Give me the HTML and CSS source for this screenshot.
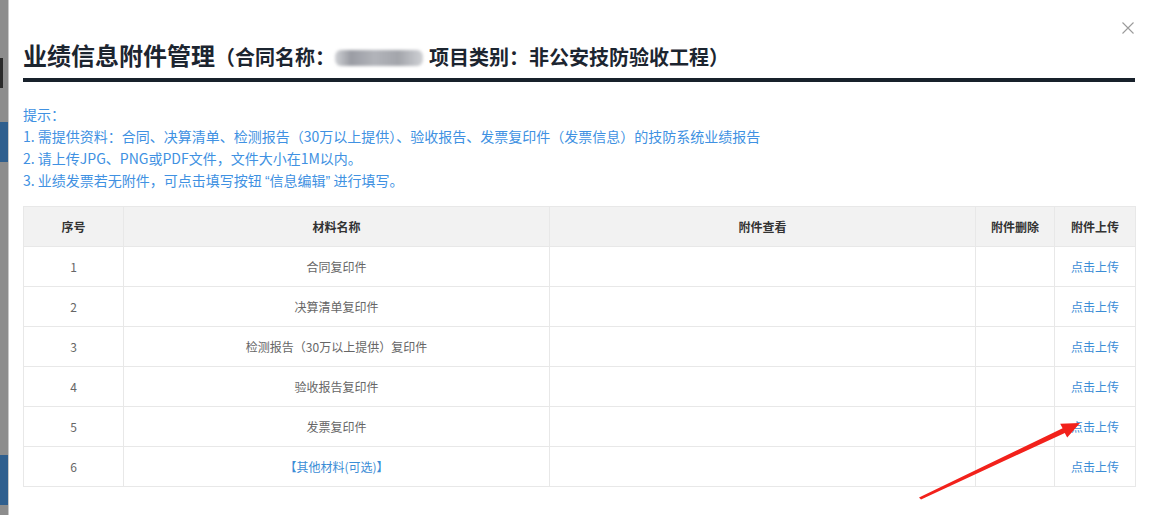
FILE: index.html
```html
<!DOCTYPE html>
<html lang="zh-CN">
<head>
<meta charset="utf-8">
<title>业绩信息附件管理</title>
<link rel="stylesheet" href="styles.css">
</head>
<body>
<div class="page">
  <div class="backdrop">
    <span class="bd-dark b1"></span>
    <span class="bd-blue b2"></span>
    <span class="bd-blue b3"></span>
  </div>
  <div class="modal">
    <svg class="close" width="12" height="12" viewBox="0 0 12 12"><path d="M0.5 0.5 L11.5 11.5 M11.5 0.5 L0.5 11.5" stroke="#9b9b9b" stroke-width="1.1" fill="none"/></svg>
    <h1 class="title">业绩信息附件管理<span class="sub">（合同名称：<span class="blur"></span>项目类别：非公安技防验收工程）</span></h1>
    <div class="rule"></div>
    <div class="tips">
      <p>提示：</p>
      <p>1. 需提供资料：合同、决算清单、检测报告（30万以上提供）、验收报告、发票复印件（发票信息）的技防系统业绩报告</p>
      <p>2. 请上传JPG、PNG或PDF文件，文件大小在1M以内。</p>
      <p>3. 业绩发票若无附件，可点击填写按钮 <span class="q">“</span>信息编辑<span class="q">”</span> 进行填写。</p>
    </div>
    <table class="grid">
      <colgroup>
        <col class="c1"><col class="c2"><col class="c3"><col class="c4"><col class="c5">
      </colgroup>
      <thead>
        <tr><th>序号</th><th>材料名称</th><th>附件查看</th><th>附件删除</th><th>附件上传</th></tr>
      </thead>
      <tbody>
        <tr><td>1</td><td>合同复印件</td><td></td><td></td><td><a class="link">点击上传</a></td></tr>
        <tr><td>2</td><td>决算清单复印件</td><td></td><td></td><td><a class="link">点击上传</a></td></tr>
        <tr><td>3</td><td>检测报告（30万以上提供）复印件</td><td></td><td></td><td><a class="link">点击上传</a></td></tr>
        <tr><td>4</td><td>验收报告复印件</td><td></td><td></td><td><a class="link">点击上传</a></td></tr>
        <tr><td>5</td><td>发票复印件</td><td></td><td></td><td><a class="link">点击上传</a></td></tr>
        <tr><td>6</td><td><a class="link">【其他材料(可选)】</a></td><td></td><td></td><td><a class="link">点击上传</a></td></tr>
      </tbody>
    </table>
  </div>
  <svg class="arrow" width="1155" height="515" viewBox="0 0 1155 515">
    <polygon points="919,497.5 1062.6,428.3 1060.2,423.8 1080,423 1067.2,437.4 1064.8,432.9 921,499.5" fill="#f2211b"/>
  </svg>
</div>
</body>
</html>
```
FILE: styles.css
```css
html, body {
  margin: 0;
  padding: 0;
  background: #ffffff;
}
body {
  font-family: "Noto Sans CJK SC", "Noto Sans", "Liberation Sans", sans-serif;
  width: 1155px;
  height: 515px;
  overflow: hidden;
}
.page {
  position: relative;
  display: flex;
  width: 1155px;
  height: 515px;
}
.backdrop {
  position: relative;
  width: 8px;
  flex: none;
  background: #8d8d8d;
  border-right: 1px solid #c9c9c9;
}
.bd-dark, .bd-blue {
  position: absolute;
  left: 0;
  width: 8px;
  display: block;
}
.b1 { top: 58px; height: 30px; background: #2a2a2a; width: 3px; }
.b2 { top: 122px; height: 40px; background: #2f5f8e; }
.b3 { top: 455px; height: 50px; background: #2f5f8e; }
.modal {
  position: relative;
  flex: 1;
  padding: 38px 11px 0 14px;
  background: #fff;
}
.close {
  position: absolute;
  top: 22px;
  right: 21px;
  display: block;
}
.title {
  margin: 0;
  height: 34px;
  line-height: 34px;
  font-size: 24px;
  font-weight: 700;
  color: #1c2530;
  white-space: nowrap;
}
.sub {
  font-size: 20px;
  font-weight: 700;
}
.blur {
  display: inline-block;
  width: 88px;
  height: 16px;
  margin: 0 6px 0 0;
  vertical-align: -1px;
  background: linear-gradient(90deg, #d0d2d6 0%, #9a9ca3 18%, #b2b4ba 45%, #a3a5ab 72%, #cfd1d5 100%);
  border-radius: 6px;
  filter: blur(1.5px);
}
.rule {
  margin-top: 6px;
  height: 4px;
  width: 1112px;
  background: #18212b;
}
.tips {
  margin-top: 21px;
  color: #4091e2;
  font-size: 14px;
  line-height: 22px;
}
.tips p {
  margin: 0;
  height: 22px;
  overflow: hidden;
}
.q {
  font-family: "Liberation Sans", sans-serif;
}
.grid {
  margin-top: 15px;
  width: 1112px;
  border-collapse: collapse;
  table-layout: fixed;
  font-size: 12px;
}
.c1 { width: 100px; }
.c2 { width: 426px; }
.c3 { width: 426px; }
.c4 { width: 79px; }
.c5 { width: 81px; }
.grid th, .grid td {
  height: 39px;
  padding: 0;
  text-align: center;
  border: 1px solid #e8e8e8;
}
.grid th {
  background: #f2f2f2;
  color: #333;
  font-weight: 700;
}
.grid td {
  color: #666;
}
.link {
  color: #3b8dd6;
  text-decoration: none;
}
.arrow {
  position: absolute;
  left: 0;
  top: 0;
  pointer-events: none;
}
```
